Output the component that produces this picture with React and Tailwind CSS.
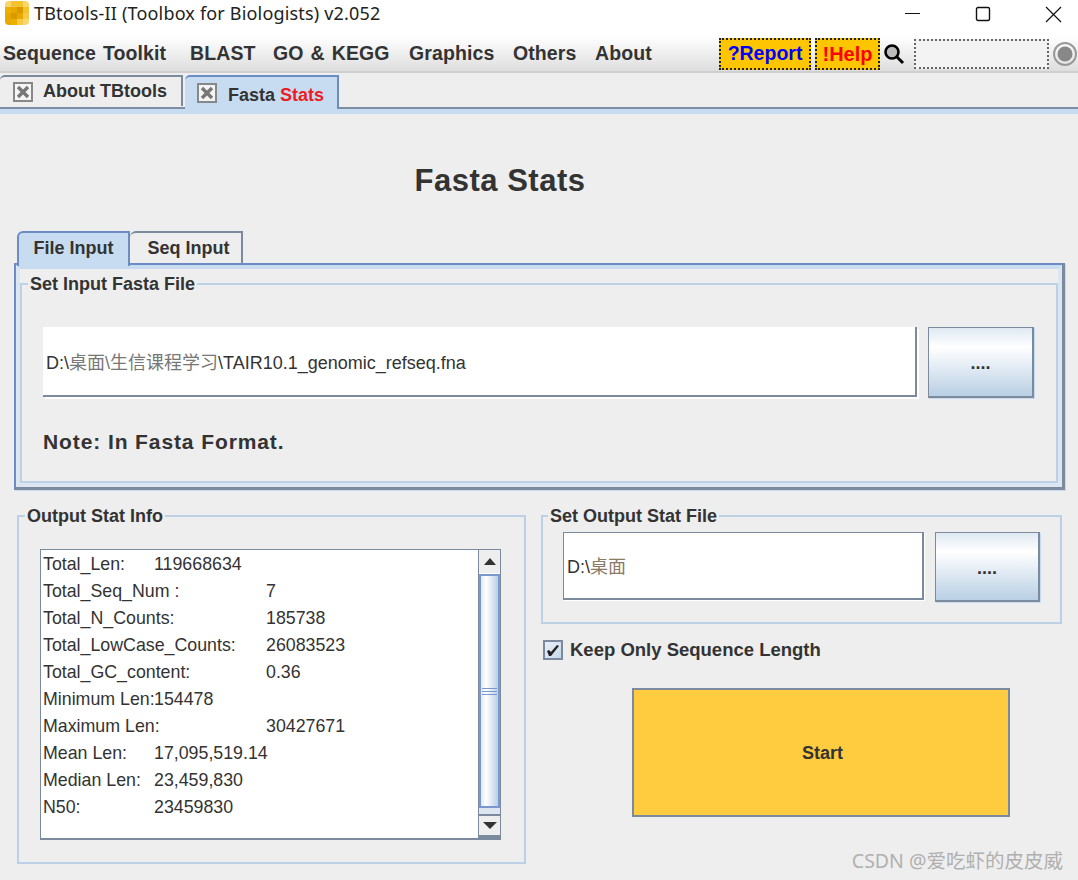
import React from "react";

const sans = "font-['Liberation_Sans','Noto_Sans_CJK_SC',sans-serif]";

function Logo() {
  const c = ["#f9d66a","#f5c230","#f5c230","#f9d66a","#eeb000","#e8a800","#d99a00","#f5c230","#e8a800","#d99a00","#e8a800","#f7c948","#e8a800","#eeb000","#f7c948","#f9d66a"];
  return (
    <svg width="24" height="24" viewBox="0 0 24 24" className="shrink-0 rounded-[4px]">
      {c.map((f, i) => (
        <rect key={i} x={(i % 4) * 6} y={Math.floor(i / 4) * 6} width="6" height="6" fill={f} />
      ))}
    </svg>
  );
}

function CloseBox() {
  return (
    <svg width="20" height="20" viewBox="0 0 20 20" className="shrink-0">
      <rect x="1" y="1" width="18" height="18" fill="#f4f4f4" stroke="#888888" strokeWidth="2" />
      <path d="M5 5 L15 15 M15 5 L5 15" stroke="#777777" strokeWidth="3.4" />
    </svg>
  );
}

function Fieldset({ title, className, legend = "left-[6px]", children }) {
  return (
    <div className={`relative border-2 border-[#bcd0e6] ${className}`}>
      <div className={`absolute ${legend} top-[-11px] bg-[#eeeeee] px-[2px] text-[18px] leading-[20px] font-bold text-[#333333] whitespace-nowrap`}>
        {title}
      </div>
      {children}
    </div>
  );
}

function BrowseButton({ className }) {
  return (
    <div className={`flex items-center justify-center border border-[#7b8a9c] border-r-2 border-b-2 shadow-[1px_1px_0_#c8dcf1] bg-[linear-gradient(180deg,#dfe9f3_0%,#ffffff_28%,#b9cfe4_100%)] font-bold text-[#333333] text-[18px] leading-none ${className}`}>
      <span className="translate-y-[1px]">....</span>
    </div>
  );
}

const rows = [
  ["Total_Len:", "119668634", "w-[111px]"],
  ["Total_Seq_Num :", "7", "w-[223px]"],
  ["Total_N_Counts:", "185738", "w-[223px]"],
  ["Total_LowCase_Counts:", "26083523", "w-[223px]"],
  ["Total_GC_content:", "0.36", "w-[223px]"],
  ["Minimum Len:", "154478", "w-[111px]"],
  ["Maximum Len:", "30427671", "w-[223px]"],
  ["Mean Len:", "17,095,519.14", "w-[111px]"],
  ["Median Len:", "23,459,830", "w-[111px]"],
  ["N50:", "23459830", "w-[111px]"],
];

const menus = [
  ["Sequence Toolkit", "w-[187px]"],
  ["BLAST", "w-[83px]"],
  ["GO & KEGG", "w-[136px]"],
  ["Graphics", "w-[104px]"],
  ["Others", "w-[82px]"],
  ["About", "w-[80px]"],
];

export default function App() {
  return (
    <div className={`w-[1078px] h-[880px] overflow-hidden relative flex flex-col bg-[#eeeeee] text-[#333333] ${sans}`}>
      {/* Title bar */}
      <div className="h-[36px] shrink-0 bg-white flex items-start pl-[5px]">
        <div className="mt-[1px]"><Logo /></div>
        <div className="ml-[5px] text-[18px] leading-[26px] text-[#222222] font-['Noto_Sans',sans-serif] whitespace-nowrap tracking-[0.18px]">
          TBtools-II (Toolbox for Biologists) v2.052
        </div>
        <div className="ml-auto flex items-start">
          <svg width="16" height="16" viewBox="0 0 16 16" className="mt-[6px] mr-[54px]"><path d="M0 7.5 H15" stroke="#111" strokeWidth="1" /></svg>
          <svg width="16" height="16" viewBox="0 0 16 16" className="mt-[6px] mr-[54px]"><rect x="1.5" y="1.5" width="13" height="13" rx="1.5" fill="none" stroke="#111" strokeWidth="1.4" /></svg>
          <svg width="17" height="17" viewBox="0 0 17 17" className="mt-[6px] mr-[16px]"><path d="M1 1 L16 16 M16 1 L1 16" stroke="#111" strokeWidth="1.2" /></svg>
        </div>
      </div>

      {/* Menu bar */}
      <div className="h-[37px] shrink-0 flex items-center pl-[3px] bg-[linear-gradient(180deg,#ffffff_0%,#dedede_100%)] border-b-2 border-[#cfcfcf]">
        {menus.map(([m, w]) => (
          <div key={m} className={`${w} shrink-0 text-[19.5px] leading-[24px] font-bold text-[#333333] whitespace-pre tracking-[0.1px] [word-spacing:1.5px] -translate-y-px`}>{m}</div>
        ))}
        <div className="ml-[44px] flex items-center">
          <div className="w-[92px] h-[32px] flex items-center justify-center bg-[#ffc600] border-2 border-dotted border-[#222222] text-[19.5px] font-bold text-[#0000ff]">?Report</div>
          <div className="ml-[4px] w-[65px] h-[32px] flex items-center justify-center bg-[#ffc600] border-2 border-dotted border-[#222222] text-[20px] font-bold text-[#ff0000]">!Help</div>
          <svg width="22" height="22" viewBox="0 0 22 22" className="ml-[3px]">
            <circle cx="9" cy="9" r="6.5" fill="#bbbbbb" stroke="#000" strokeWidth="2.6" />
            <path d="M13.5 13.5 L20 20" stroke="#000" strokeWidth="3" />
          </svg>
          <div className="ml-[9px] w-[135px] h-[30px] bg-[#f3f3f3] border-2 border-dotted border-[#666666]" />
          <svg width="26" height="26" viewBox="0 0 26 26" className="ml-[3px]">
            <circle cx="13" cy="13" r="11" fill="none" stroke="#999999" strokeWidth="2" />
            <circle cx="13" cy="13" r="7.5" fill="#888888" />
          </svg>
        </div>
      </div>

      {/* Document tabs */}
      <div className="h-[36px] shrink-0 flex items-end border-b-2 border-[#7d8ea4]">
        <div className="w-[183px] h-[31px] flex items-center pl-[13px] gap-[10px] border-t-2 border-r-2 border-[#7b8a9c] rounded-tl-[5px] bg-[#eeeeee] mb-[1px]">
          <CloseBox />
          <span className="text-[18px] font-bold text-[#333333] whitespace-nowrap">About TBtools</span>
        </div>
        <div className="ml-[2px] w-[154px] h-[34px] flex items-center pl-[12px] gap-[11px] border-t-2 border-r-2 border-[#6b8cc4] rounded-tl-[5px] bg-[#c8dcf1] mb-[-2px] z-10">
          <CloseBox />
          <span className="text-[18px] font-bold whitespace-nowrap translate-y-[2px]">
            <span className="text-[#333333]">Fasta </span><span className="text-[#ed1c24]">Stats</span>
          </span>
        </div>
      </div>
      <div className="h-[5px] shrink-0 bg-[#c8dcf1]" />

      {/* Heading */}
      <div className="h-[116px] shrink-0 w-[1000px] flex items-center justify-center pt-[18px] text-[31px] font-bold text-[#333333] tracking-[0.5px]">
        Fasta Stats
      </div>

      {/* Tabbed pane */}
      <div className="ml-[14px] w-[1051px] shrink-0">
        <div className="h-[33px] flex items-end pl-[3px]">
          <div className="w-[113px] h-[35px] pb-[2px] flex items-center justify-center border-t-2 border-l-2 border-r-2 border-[#6b8cc4] rounded-tl-[6px] bg-[#c8dcf1] text-[18px] font-bold text-[#333333] z-10 mb-[-3px]">File Input</div>
          <div className="w-[113px] h-[32px] pl-[6px] flex items-center justify-center border-t-2 border-r-2 border-[#7b8a9c] rounded-tl-[6px] text-[18px] font-bold text-[#333333]">Seq Input</div>
        </div>
        <div className="h-[227px] border-t-2 border-l-2 border-[#6b8cc4] border-r-[3px] border-b-[3px] border-r-[#7b8a9c] border-b-[#7b8a9c] shadow-[1px_1px_0_#c8dcf1]">
          <div className="h-full border-t-[4px] border-x-[4px] border-b-[4px] border-[#c8dcf1] border-x-[#dbe6f2] border-b-[#dbe6f2]">
            <Fieldset title="Set Input Fasta File" className="mt-[14px] h-[200px] mx-0">
              <div className="pl-[21px] pt-[42px] pr-[22px] flex items-start">
                <div className="w-[875px] h-[70px] bg-white border-r-2 border-b-2 border-[#7b8a9c] flex items-center pl-[3px] text-[18px] text-[#333333] shadow-[2px_2px_0_#ffffff]">
                  <span className="translate-y-[2px]">D:\<span className="text-[#777777]">桌面\生信课程学习</span>\TAIR10.1_genomic_refseq.fna</span>
                </div>
                <BrowseButton className="ml-[11px] w-[106px] h-[71px]" />
              </div>
              <div className="pl-[21px] mt-[32px] text-[21px] leading-[24px] font-bold text-[#333333] tracking-[0.9px]">Note: In Fasta Format.</div>
            </Fieldset>
          </div>
        </div>
      </div>

      {/* Lower section */}
      <div className="mt-[25px] pl-[17px] flex items-start">
        <Fieldset title="Output Stat Info" className="w-[509px] h-[349px] shrink-0">
          <div className="mt-[32px] ml-[21px] w-[461px] h-[291px] bg-white border border-[#7b8a9c] border-b-2 flex">
            <div className="flex-1 pt-[1px]">
              {rows.map(([k, v, w]) => (
                <div key={k} className="h-[27px] flex items-center pl-[2px] text-[17.8px] text-[#333333] whitespace-nowrap">
                  <span className={`${w} shrink-0`}>{k}</span>
                  <span>{v}</span>
                </div>
              ))}
            </div>
            <div className="w-[22px] shrink-0 flex flex-col border-l border-[#7b8a9c] bg-[#dde6f0]">
              <div className="h-[24px] flex items-center justify-center bg-[#eeeeee] border-b border-[#ffffff]">
                <svg width="12" height="7" viewBox="0 0 12 7"><path d="M6 0 L12 7 H0 Z" fill="#333" /></svg>
              </div>
              <div className="h-[234px] flex items-center justify-center border-2 border-[#7a98cf] bg-[linear-gradient(90deg,#dfe9f3_0%,#ffffff_30%,#b9cfe4_100%)]">
                <div className="w-[15px] h-[7px] border-y border-[#7a98cf] flex items-center"><div className="w-full h-px bg-[#7a98cf]" /></div>
              </div>
              <div className="flex-1 mt-[6px] flex items-center justify-center bg-[#eeeeee] border-t-2 border-[#7b8a9c] border-b-[3px]">
                <svg width="14" height="7" viewBox="0 0 14 7"><path d="M0 0 H14 L7 7 Z" fill="#333" /></svg>
              </div>
            </div>
          </div>
        </Fieldset>

        <div className="ml-[15px] w-[521px] shrink-0">
          <Fieldset title="Set Output Stat File" legend="left-[5px]" className="h-[109px]">
            <div className="pt-[15px] pl-[20px] flex items-start">
              <div className="w-[361px] h-[68px] bg-white border-t border-l border-[#7b8a9c] border-r-2 border-b-2 flex items-center pl-[3px] text-[18px] shadow-[1px_1px_0_#ffffff]">
                <span className="translate-y-[2px]">D:\<span className="text-[#8a7a66]">桌面</span></span>
              </div>
              <BrowseButton className="ml-[11px] w-[105px] h-[70px]" />
            </div>
          </Fieldset>
          <div className="mt-[15px] pl-[2px] h-[22px] flex items-center">
            <div className="w-[20px] h-[20px] border-2 border-[#7b8a9c] bg-[linear-gradient(135deg,#e8eff7,#c8d9ea)] flex items-center justify-center">
              <svg width="14" height="13" viewBox="0 0 14 13"><path d="M1 7 L3 6 L5 8 L11 1 L13 2 L5 12 L3 12 Z" fill="#222" /></svg>
            </div>
            <span className="ml-[7px] text-[18.5px] font-bold text-[#333333] whitespace-nowrap">Keep Only Sequence Length</span>
          </div>
          <div className="mt-[27px] ml-[91px] w-[378px] h-[129px] pt-[2px] pl-[3px] bg-[#ffcc3f] border-2 border-[#7b8a9c] flex items-center justify-center text-[18px] font-bold text-[#333333]">
            Start
          </div>
        </div>
      </div>

      {/* Watermark */}
      <div className="absolute right-[15px] top-[849px] text-[19.5px] leading-[24px] text-[#b0b0b0] whitespace-nowrap font-['Noto_Sans','Noto_Sans_CJK_SC',sans-serif]">
        CSDN @爱吃虾的皮皮威
      </div>
    </div>
  );
}
